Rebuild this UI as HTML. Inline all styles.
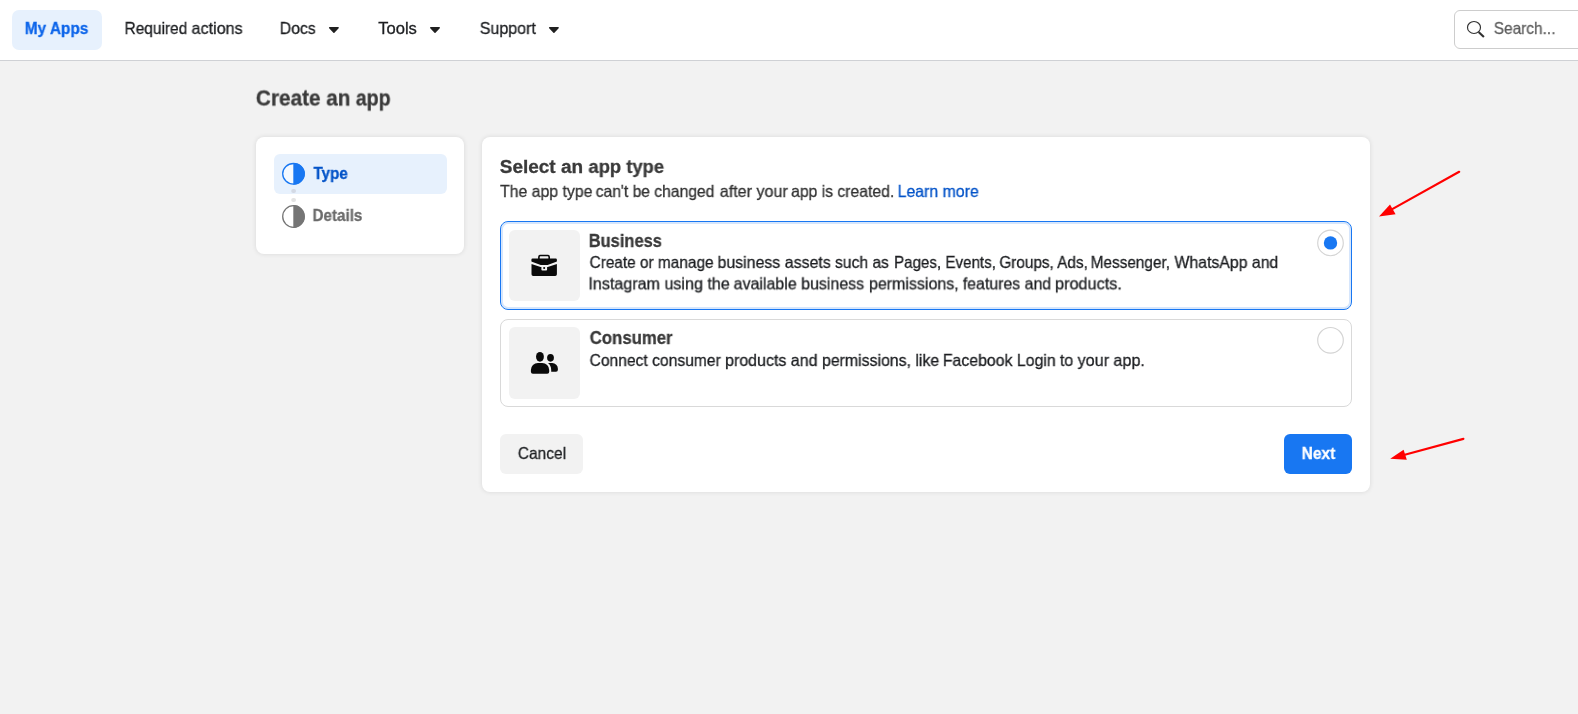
<!DOCTYPE html>
<html lang="en">
<head>
<meta charset="utf-8">
<title>Create an app</title>
<style>
html,body{margin:0;padding:0;}
body{width:1578px;height:714px;overflow:hidden;background:#f2f2f2;font-family:"Liberation Sans",sans-serif;color:#1c1e21;position:relative;}
.abs{position:absolute;}
.tx{position:absolute;left:0;will-change:transform;-webkit-text-stroke:0.3px currentColor;white-space:nowrap;line-height:24px;transform-origin:0 50%;}
#nav{left:0;top:0;width:1578px;height:60px;background:#fff;border-bottom:1px solid #cfd1d5;}
#myapps{left:12px;top:10px;width:90px;height:40px;background:#e7f1fd;border-radius:7px;}
#search{left:1454px;top:10px;width:140px;height:37px;border:1px solid #cdcdcd;border-radius:6px;background:#fff;}
.card{position:absolute;background:#fff;border-radius:8px;box-shadow:0 0 5px rgba(0,0,0,.11);}
#side{left:256px;top:137px;width:208px;height:117px;}
#main{left:482px;top:137px;width:888px;height:355px;}
#typeitem{left:274px;top:154px;width:173px;height:40px;background:#e7f1fd;border-radius:6px;}
.opt{position:absolute;left:500px;width:850px;border-radius:8px;background:#fff;}
.tile{position:absolute;left:509px;width:71px;height:71px;border-radius:6px;background:#f2f2f2;}
.radio{position:absolute;width:24px;height:24px;border-radius:50%;border:1.3px solid #d6d6d6;background:#fff;}
.btn{position:absolute;height:40px;border-radius:6px;}
</style>
</head>
<body>
<div id="nav" class="abs"></div>
<div id="myapps" class="abs"></div>
<svg class="abs" style="left:320px;top:20px" width="250" height="20" viewBox="320 20 250 20">
  <g fill="#202020" stroke="#202020" stroke-width="1.4" stroke-linejoin="round">
    <path d="M329.65 27.7 H338.15 L333.9 32.3 Z"/>
    <path d="M430.75 27.7 H439.25 L435.0 32.3 Z"/>
    <path d="M549.65 27.7 H558.15 L553.9 32.3 Z"/>
  </g>
</svg>
<div id="search" class="abs"></div>
<svg class="abs" style="left:1462px;top:14px" width="28" height="28" viewBox="1462 14 28 28">
  <ellipse cx="1474.0" cy="27.45" rx="6.5" ry="6.0" fill="none" stroke="#303030" stroke-width="1.15"/>
  <path d="M1478.6 31.9 L1483.9 36.9" stroke="#303030" stroke-width="2.1" fill="none"/>
</svg>

<div id="side" class="card"></div>
<div id="typeitem" class="abs"></div>
<svg class="abs" style="left:278px;top:158px" width="32" height="76" viewBox="278 158 32 76">
  <ellipse cx="293.5" cy="173.8" rx="10.8" ry="10.3" fill="#f4f9ff" stroke="#1877f2" stroke-width="1.3"/>
  <path d="M293.3 162.9 A11.4 10.9 0 0 1 293.3 184.7 Z" fill="#1877f2"/>
  <rect x="291.2" y="189" width="4.8" height="4" rx="2" fill="#d3d9e4"/>
  <rect x="291.2" y="198" width="4.8" height="4" rx="2" fill="#e3e3e3"/>
  <ellipse cx="293.5" cy="216.5" rx="10.8" ry="10.8" fill="#fff" stroke="#757575" stroke-width="1.3"/>
  <path d="M293.3 205.1 A11.4 11.4 0 0 1 293.3 227.9 Z" fill="#757575"/>
</svg>

<div id="main" class="card"></div>
<div class="opt" style="top:221px;height:87px;border:1px solid #1877f2;box-shadow:inset 0 0 0 2px #d6e6fc;"></div>
<div class="opt" style="top:319px;height:86px;border:1px solid #d9d9d9;"></div>
<div class="tile" style="top:230px"></div>
<div class="tile" style="top:327px;height:72px"></div>

<svg class="abs" style="left:524px;top:248px" width="40" height="34" viewBox="0 0 40 34">
  <path d="M14.9 11 V9.0 a1.5 1.5 0 0 1 1.5-1.5 h7.3 a1.5 1.5 0 0 1 1.5 1.5 V11" fill="none" stroke="#0a0a0a" stroke-width="1.6"/>
  <path d="M8.6 10.6 H31.7 a1.2 1.2 0 0 1 1.2 1.2 V13.0 a0.9 0.9 0 0 1 -0.55 0.83 L23.6 17.0 H16.7 L7.95 13.83 a0.9 0.9 0 0 1 -0.55 -0.83 V11.8 a1.2 1.2 0 0 1 1.2-1.2 Z" fill="#0a0a0a"/>
  <path d="M7.5 16.6 a0.5 0.5 0 0 1 0.7 -0.45 L16.6 19.0 H23.7 L32.2 16.15 a0.5 0.5 0 0 1 0.7 0.45 V26.2 a1.7 1.7 0 0 1 -1.7 1.7 H9.2 a1.7 1.7 0 0 1 -1.7 -1.7 Z" fill="#0a0a0a"/>
  <rect x="17.4" y="17.3" width="5.7" height="5.15" rx="1" fill="#f2f2f2"/>
  <circle cx="20.15" cy="20.05" r="1.05" fill="#0a0a0a"/>
</svg>

<svg class="abs" style="left:524px;top:345px" width="40" height="34" viewBox="0 0 40 34">
  <g fill="#0a0a0a">
    <ellipse cx="15.95" cy="11.8" rx="3.9" ry="4.9"/>
    <path d="M6.9 26.8 V25 a7 7 0 0 1 7-7 h4.3 a7 7 0 0 1 7 7 v1.8 a2 2 0 0 1 -2 2 H8.9 a2 2 0 0 1 -2-2 z"/>
    <ellipse cx="26.5" cy="12.86" rx="3.4" ry="3.8"/>
    <path d="M24.0 18.1 H28.2 a5.7 5.7 0 0 1 5.7 5.7 V24.8 a1.9 1.9 0 0 1 -1.9 1.9 H27.2 V25 C27.2 22 26 19.8 24.0 18.1 Z"/>
  </g>
</svg>

<svg class="abs" style="left:1310px;top:224px" width="40" height="136" viewBox="1310 224 40 136">
  <circle cx="1330.5" cy="242.9" r="12.8" fill="#fff" stroke="#d4d4d4" stroke-width="1.15"/>
  <circle cx="1330.5" cy="242.9" r="6.7" fill="#1877f2"/>
  <circle cx="1330.5" cy="340.3" r="12.8" fill="#fff" stroke="#d4d4d4" stroke-width="1.15"/>
</svg>

<div class="btn" style="left:500px;top:434px;width:83px;background:#f2f2f2;"></div>
<div class="btn" style="left:1284px;top:434px;width:68px;background:#1877f2;"></div>

<div id="t_myapps" class="tx" style="top:16px;font-size:16.5px;font-weight:bold;color:#0d65ea;transform:translate(24.74px,0px) scaleX(0.9326)">My Apps</div>
<div id="t_req0" class="tx" style="top:16px;font-size:16.5px;font-weight:normal;color:#1c1e21;transform:translate(124.51px,0px) scaleX(0.9382)">Required</div>
<div id="t_req1" class="tx" style="top:16px;font-size:16.5px;font-weight:normal;color:#1c1e21;transform:translate(191.56px,0px) scaleX(0.9772)">actions</div>
<div id="t_docs" class="tx" style="top:16px;font-size:16.5px;font-weight:normal;color:#1c1e21;transform:translate(279.73px,0px) scaleX(0.9591)">Docs</div>
<div id="t_tools" class="tx" style="top:16px;font-size:16.5px;font-weight:normal;color:#1c1e21;transform:translate(378.16px,0px) scaleX(1.0050)">Tools</div>
<div id="t_support" class="tx" style="top:16px;font-size:16.5px;font-weight:normal;color:#1c1e21;transform:translate(479.73px,0px) scaleX(0.9710)">Support</div>
<div id="t_search" class="tx" style="top:16px;font-size:16.5px;font-weight:normal;color:#5e5e5e;transform:translate(1493.76px,0px) scaleX(0.9347)">Search...</div>
<div id="t_create0" class="tx" style="top:86px;font-size:22px;font-weight:bold;color:#3a3a3a;transform:translate(255.85px,0.5px) scaleX(0.9442)">Create an</div>
<div id="t_create1" class="tx" style="top:86px;font-size:22px;font-weight:bold;color:#3a3a3a;transform:translate(355.78px,0.5px) scaleX(0.8886)">app</div>
<div id="t_type" class="tx" style="top:162px;font-size:16px;font-weight:bold;color:#0353c8;transform:translate(313.42px,0px) scaleX(0.9498)">Type</div>
<div id="t_details" class="tx" style="top:204px;font-size:16px;font-weight:bold;color:#6a6a6a;transform:translate(312.51px,0px) scaleX(0.9497)">Details</div>
<div id="t_select0" class="tx" style="top:155px;font-size:18.7px;font-weight:bold;color:#3a3a3a;transform:translate(499.76px,0px) scaleX(1.0158)">Select an</div>
<div id="t_select1" class="tx" style="top:155px;font-size:18.7px;font-weight:bold;color:#3a3a3a;transform:translate(588.41px,0px) scaleX(0.9836)">app type</div>
<div id="t_sub0" class="tx" style="top:179px;font-size:16.5px;font-weight:normal;color:#333;transform:translate(500.07px,0px) scaleX(0.9584)">The app type</div>
<div id="t_sub1" class="tx" style="top:179px;font-size:16.5px;font-weight:normal;color:#333;transform:translate(595.70px,0px) scaleX(0.9478)">can't be changed</div>
<div id="t_sub2" class="tx" style="top:179px;font-size:16.5px;font-weight:normal;color:#333;transform:translate(719.81px,0px) scaleX(0.9759)">after your</div>
<div id="t_sub3" class="tx" style="top:179px;font-size:16.5px;font-weight:normal;color:#333;transform:translate(791.12px,0px) scaleX(0.9529)">app is created.</div>
<div id="t_learn" class="tx" style="top:179px;font-size:16.5px;font-weight:normal;color:#0353c8;transform:translate(897.62px,0px) scaleX(0.9616)">Learn more</div>
<div id="t_bus" class="tx" style="top:229px;font-size:17.7px;font-weight:bold;color:#3a3a3a;transform:translate(588.69px,0px) scaleX(0.9312)">Business</div>
<div id="t_bda0" class="tx" style="top:250px;font-size:16.5px;font-weight:normal;color:#1c1e21;transform:translate(589.56px,0px) scaleX(0.9327)">Create or manage</div>
<div id="t_bda1" class="tx" style="top:250px;font-size:16.5px;font-weight:normal;color:#1c1e21;transform:translate(717.52px,0px) scaleX(0.9640)">business assets</div>
<div id="t_bda2" class="tx" style="top:250px;font-size:16.5px;font-weight:normal;color:#1c1e21;transform:translate(834.97px,0px) scaleX(0.9494)">such as</div>
<div id="t_bda3" class="tx" style="top:250px;font-size:16.5px;font-weight:normal;color:#1c1e21;transform:translate(894.06px,0px) scaleX(0.9171)">Pages, Events,</div>
<div id="t_bda4" class="tx" style="top:250px;font-size:16.5px;font-weight:normal;color:#1c1e21;transform:translate(999.37px,0px) scaleX(0.9282)">Groups, Ads,</div>
<div id="t_bda5" class="tx" style="top:250px;font-size:16.5px;font-weight:normal;color:#1c1e21;transform:translate(1090.62px,0px) scaleX(0.9302)">Messenger,</div>
<div id="t_bda6" class="tx" style="top:250px;font-size:16.5px;font-weight:normal;color:#1c1e21;transform:translate(1174.50px,0px) scaleX(0.9584)">WhatsApp and</div>
<div id="t_bdb0" class="tx" style="top:271px;font-size:16.5px;font-weight:normal;color:#1c1e21;transform:translate(588.45px,0.35px) scaleX(0.9751)">Instagram using the</div>
<div id="t_bdb1" class="tx" style="top:271px;font-size:16.5px;font-weight:normal;color:#1c1e21;transform:translate(733.65px,0.35px) scaleX(0.9678)">available business</div>
<div id="t_bdb2" class="tx" style="top:271px;font-size:16.5px;font-weight:normal;color:#1c1e21;transform:translate(868.99px,0.35px) scaleX(0.9686)">permissions,</div>
<div id="t_bdb3" class="tx" style="top:271px;font-size:16.5px;font-weight:normal;color:#1c1e21;transform:translate(962.82px,0.35px) scaleX(0.9622)">features and</div>
<div id="t_bdb4" class="tx" style="top:271px;font-size:16.5px;font-weight:normal;color:#1c1e21;transform:translate(1054.94px,0.35px) scaleX(0.9868)">products.</div>
<div id="t_con" class="tx" style="top:326px;font-size:17.7px;font-weight:bold;color:#3a3a3a;transform:translate(589.75px,0px) scaleX(0.9470)">Consumer</div>
<div id="t_cd0" class="tx" style="top:348px;font-size:16.5px;font-weight:normal;color:#1c1e21;transform:translate(589.56px,0px) scaleX(0.9473)">Connect consumer</div>
<div id="t_cd1" class="tx" style="top:348px;font-size:16.5px;font-weight:normal;color:#1c1e21;transform:translate(725.04px,0px) scaleX(0.9697)">products and</div>
<div id="t_cd2" class="tx" style="top:348px;font-size:16.5px;font-weight:normal;color:#1c1e21;transform:translate(822.01px,0px) scaleX(0.9609)">permissions, like</div>
<div id="t_cd3" class="tx" style="top:348px;font-size:16.5px;font-weight:normal;color:#1c1e21;transform:translate(942.84px,0px) scaleX(0.9611)">Facebook Login</div>
<div id="t_cd4" class="tx" style="top:348px;font-size:16.5px;font-weight:normal;color:#1c1e21;transform:translate(1059.84px,0px) scaleX(0.9747)">to your app.</div>
<div id="t_cancel" class="tx" style="top:441px;font-size:16.5px;font-weight:normal;color:#1c1e21;transform:translate(517.81px,0px) scaleX(0.9397)">Cancel</div>
<div id="t_next" class="tx" style="top:441px;font-size:16.5px;font-weight:bold;color:#ffffff;transform:translate(1301.60px,0px) scaleX(0.9419)">Next</div>

<svg class="abs" style="left:1370px;top:160px;pointer-events:none" width="110" height="310" viewBox="1370 160 110 310">
  <g stroke="#ff0000" stroke-width="2.2" stroke-linecap="round" fill="none">
    <line x1="1459.2" y1="171.8" x2="1390" y2="210.4"/>
    <line x1="1463.4" y1="438.9" x2="1402" y2="455.5"/>
  </g>
  <g fill="#ff0000">
    <path d="M1379 216.6 L1390 204.6 L1395.6 214.3 Z"/>
    <path d="M1390.2 458.7 L1403.6 449.8 L1406.8 459.8 Z"/>
  </g>
</svg>
</body>
</html>
